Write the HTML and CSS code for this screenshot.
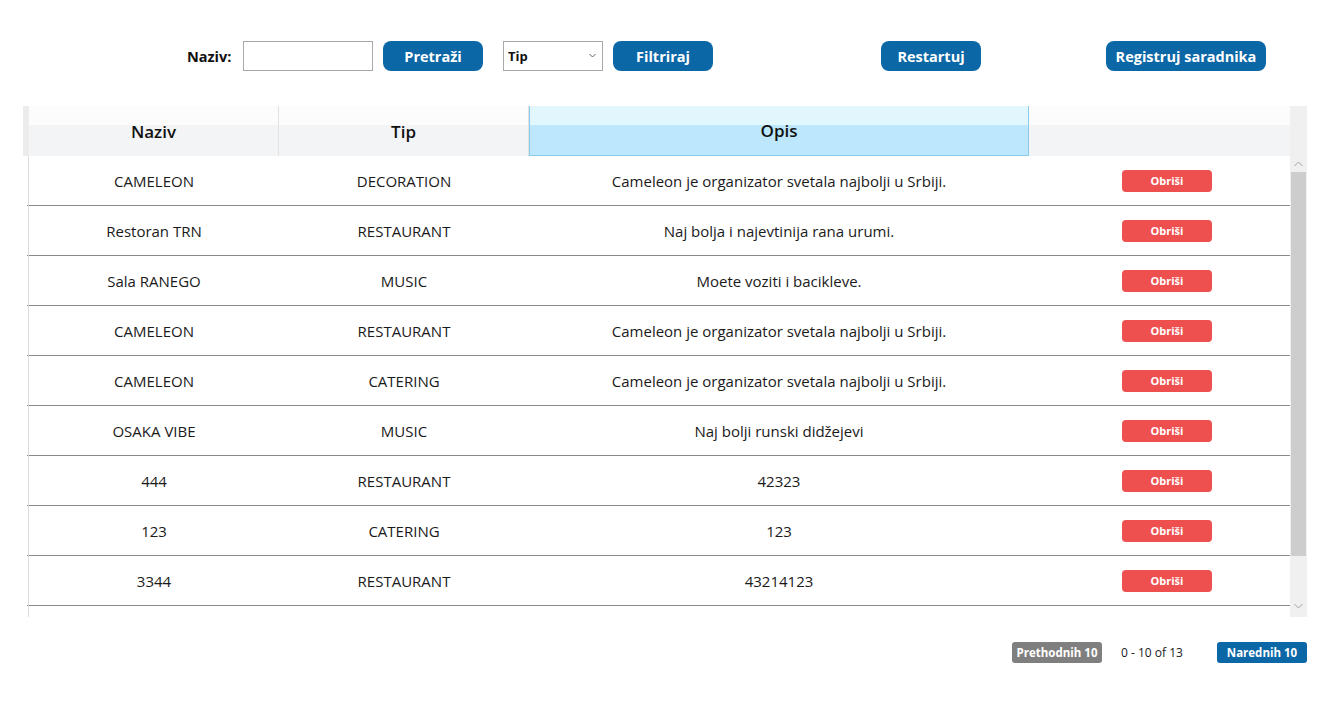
FILE: index.html
```html
<!DOCTYPE html>
<html lang="sr">
<head>
<meta charset="utf-8">
<title>Saradnici</title>
<link rel="stylesheet" href="styles.css">
</head>
<body>
<div class="toolbar">
  <label class="lbl" for="naziv">Naziv:</label>
  <input id="naziv" class="inp" type="text">
  <button class="btn btn-search">Pretraži</button>
  <div class="sel-wrap">
    <select class="sel"><option>Tip</option></select>
    <svg class="chev" width="7" height="5" viewBox="0 0 7 5"><path d="M0.5 1 L3.5 4 L6.5 1" fill="none" stroke="#666" stroke-width="1"/></svg>
  </div>
  <button class="btn btn-filter">Filtriraj</button>
  <button class="btn btn-reset">Restartuj</button>
  <button class="btn btn-reg">Registruj saradnika</button>
</div>

<div class="table-box">
  <div class="table-main">
    <div class="thead">
      <div class="th-strip"></div>
      <div class="th c1">Naziv</div>
      <div class="th c2">Tip</div>
      <div class="th c3 th-hover">Opis</div>
      <div class="th c4"></div>
    </div>
    <div class="tbody">
      <div class="tr"><div class="td c1">CAMELEON</div><div class="td c2">DECORATION</div><div class="td c3">Cameleon je organizator svetala najbolji u Srbiji.</div><div class="td c4"><button class="del">Obriši</button></div></div>
      <div class="tr"><div class="td c1">Restoran TRN</div><div class="td c2">RESTAURANT</div><div class="td c3">Naj bolja i najevtinija rana urumi.</div><div class="td c4"><button class="del">Obriši</button></div></div>
      <div class="tr"><div class="td c1">Sala RANEGO</div><div class="td c2">MUSIC</div><div class="td c3">Moete voziti i bacikleve.</div><div class="td c4"><button class="del">Obriši</button></div></div>
      <div class="tr"><div class="td c1">CAMELEON</div><div class="td c2">RESTAURANT</div><div class="td c3">Cameleon je organizator svetala najbolji u Srbiji.</div><div class="td c4"><button class="del">Obriši</button></div></div>
      <div class="tr"><div class="td c1">CAMELEON</div><div class="td c2">CATERING</div><div class="td c3">Cameleon je organizator svetala najbolji u Srbiji.</div><div class="td c4"><button class="del">Obriši</button></div></div>
      <div class="tr"><div class="td c1">OSAKA VIBE</div><div class="td c2">MUSIC</div><div class="td c3">Naj bolji runski didžejevi</div><div class="td c4"><button class="del">Obriši</button></div></div>
      <div class="tr"><div class="td c1">444</div><div class="td c2">RESTAURANT</div><div class="td c3">42323</div><div class="td c4"><button class="del">Obriši</button></div></div>
      <div class="tr"><div class="td c1">123</div><div class="td c2">CATERING</div><div class="td c3">123</div><div class="td c4"><button class="del">Obriši</button></div></div>
      <div class="tr"><div class="td c1">3344</div><div class="td c2">RESTAURANT</div><div class="td c3">43214123</div><div class="td c4"><button class="del">Obriši</button></div></div>
    </div>
  </div>
  <div class="vscroll">
    <div class="vs-head"></div>
    <div class="vs-arrow">
      <svg width="9" height="6" viewBox="0 0 9 6"><path d="M0.5 5 L4.5 1 L8.5 5" fill="none" stroke="#a3a3a3" stroke-width="1"/></svg>
    </div>
    <div class="vs-thumb"></div>
    <div class="vs-track"></div>
    <div class="vs-arrow">
      <svg width="9" height="6" viewBox="0 0 9 6"><path d="M0.5 1 L4.5 5 L8.5 1" fill="none" stroke="#a3a3a3" stroke-width="1"/></svg>
    </div>
    <div class="vs-end"></div>
  </div>
</div>

<div class="pager">
  <button class="pbtn pbtn-prev">Prethodnih 10</button>
  <span class="pinfo">0 - 10 of 13</span>
  <button class="pbtn pbtn-next">Narednih 10</button>
</div>
</body>
</html>
```

FILE: styles.css
```css
* { box-sizing: border-box; }
html, body { margin: 0; padding: 0; background: #fff; }
body {
  font-family: "Open Sans", "Noto Sans", sans-serif;
  color: #1a1a1a;
  width: 1335px;
  height: 706px;
  overflow: hidden;
}

/* toolbar */
.toolbar {
  display: flex;
  align-items: center;
  height: 30px;
  margin-top: 41px;
  padding-left: 187px;
}
.lbl {
  font-weight: 700;
  font-size: 14.5px;
  color: #111;
  width: 56px;
}
.inp {
  width: 130px;
  height: 30px;
  border: 1px solid #a9a9a9;
  border-radius: 0;
  margin: 0 10px 0 0;
  padding: 0 4px;
}
.btn {
  height: 30px;
  border: none;
  border-radius: 8px;
  background: #0b67a6;
  color: #fff;
  font-family: "Open Sans", "Noto Sans", sans-serif;
  font-weight: 700;
  font-size: 14.5px;
  padding: 0;
  cursor: pointer;
}
.btn-search { width: 100px; margin-right: 20px; }
.btn-filter { width: 100px; margin-left: 10px; }
.btn-reset { width: 100px; margin-left: 168px; }
.btn-reg { width: 160px; margin-left: 125px; }

.sel-wrap {
  position: relative;
  width: 100px;
  height: 30px;
}
.sel {
  appearance: none;
  -webkit-appearance: none;
  width: 100px;
  height: 30px;
  border: 1px solid #a9a9a9;
  border-radius: 0;
  background: #fff;
  font-family: "Open Sans", "Noto Sans", sans-serif;
  font-weight: 700;
  font-size: 13px;
  color: #111;
  padding: 0 4px;
}
.chev {
  position: absolute;
  right: 7px;
  top: 12px;
  pointer-events: none;
}

/* table */
.table-box {
  display: flex;
  width: 1284px;
  height: 511px;
  margin: 35px 0 0 23px;
  overflow: hidden;
}
.table-main {
  width: 1267px;
  display: flex;
  flex-direction: column;
}
.thead {
  display: flex;
  height: 50px;
  flex: none;
}
.th-strip {
  width: 6px;
  background: #ececec;
}
.th {
  display: flex;
  align-items: center;
  justify-content: center;
  font-size: 17px;
  font-weight: 600;
  color: #111;
  background: linear-gradient(#fcfcfc 0, #fcfcfc 19px, #f3f4f6 19px, #f3f4f6 100%);
  border-right: 1px solid #e2e2e2;
}
.th.c4 { border-right: none; }
.th-hover {
  background: linear-gradient(#e2f6fd 0, #e2f6fd 19px, #bde7fc 19px, #bde7fc 100%);
  border: 1px solid #8cc9ea;
  border-top: none;
}
.c1 { width: 250px; }
.c2 { width: 250px; }
.c3 { width: 500px; }
.c4 { width: 261px; }

.tbody {
  flex: 1;
  overflow: hidden;
  padding-left: 6px;
  position: relative;
}
.tbody::before {
  content: "";
  position: absolute;
  left: 5px;
  top: 0;
  bottom: 0;
  width: 1px;
  background: #dedede;
}
.tr {
  display: flex;
  height: 50px;
  border-bottom: 1px solid #8a8a8a;
  margin-left: -2px;
  padding-left: 2px;
}
.td {
  display: flex;
  align-items: center;
  justify-content: center;
  font-size: 15px;
  color: #1a1a1a;
}
.td.c4 {
  justify-content: flex-start;
  padding-left: 93px;
}
.del {
  width: 90px;
  height: 22px;
  border: none;
  border-radius: 4px;
  background: #ee4f4f;
  color: #fff;
  font-family: "Open Sans", "Noto Sans", sans-serif;
  font-weight: 700;
  font-size: 11px;
  padding: 0;
}

/* scrollbar */
.vscroll {
  width: 17px;
  display: flex;
  flex-direction: column;
  background: #f0f0f0;
}
.vs-head { height: 50px; flex: none; }
.vs-arrow {
  height: 16px;
  flex: none;
  display: flex;
  align-items: center;
  justify-content: center;
}
.vs-thumb {
  height: 384px;
  flex: none;
  margin: 0 1px;
  background: #cdcdcd;
}
.vs-track { flex: 1; }
.vs-end { height: 3px; flex: none; }

/* pager */
.pager {
  display: flex;
  align-items: center;
  justify-content: flex-end;
  margin-top: 25px;
  width: 1307px;
}
.pbtn {
  height: 21px;
  width: 90px;
  border: none;
  border-radius: 3px;
  color: #fff;
  font-family: "Open Sans", "Noto Sans", sans-serif;
  font-weight: 700;
  font-size: 11.5px;
  padding: 0;
}
.pbtn-prev { background: #7f7f7f; }
.pbtn-next { background: #0b67a6; }
.pinfo {
  font-size: 12px;
  color: #1a1a1a;
  width: 115px;
  padding-left: 19px;
  text-align: left;
}
```
